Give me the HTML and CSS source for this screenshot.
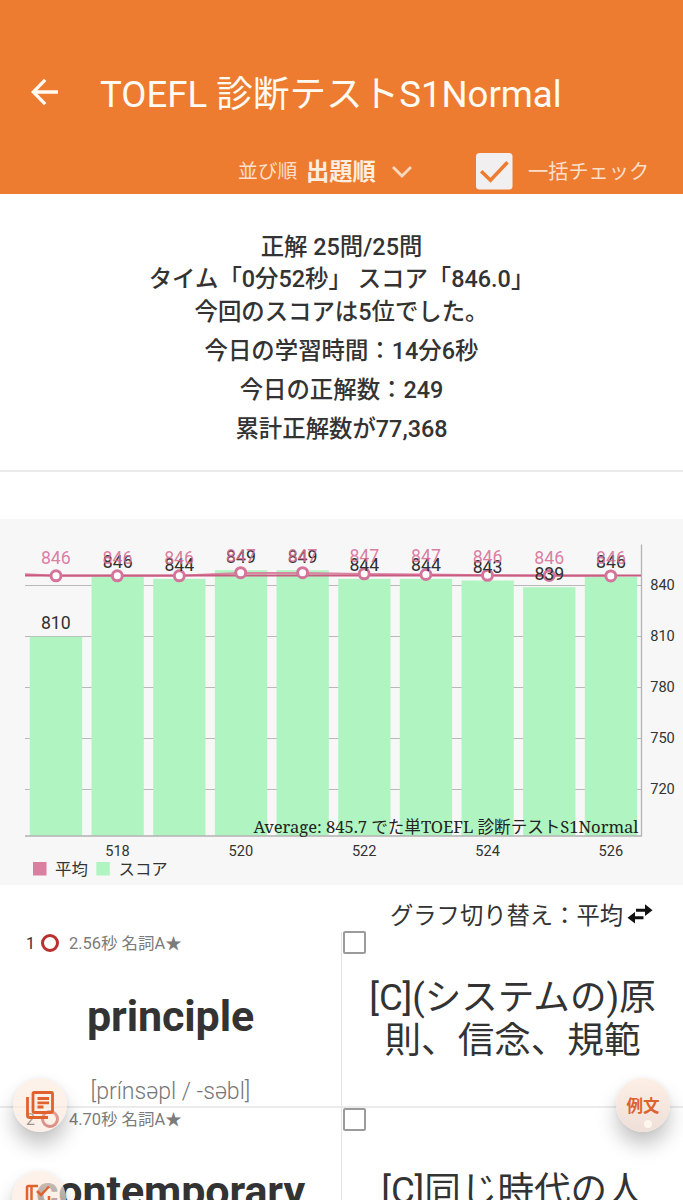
FILE: index.html
```html
<!DOCTYPE html>
<html lang="ja">
<head>
<meta charset="utf-8">
<title>TOEFL 診断テストS1Normal</title>
<link rel="stylesheet" href="styles.css">
</head>
<body>
<div class="screen">
  <header class="appbar">
    <div class="title-row">
      <svg class="back" width="28" height="28" viewBox="0 0 28 28"><path d="M27 14H3M14.2 1.8 2.2 14l12 12.2" fill="none" stroke="#fffaf2" stroke-width="3.3"/></svg>
      <h1>TOEFL 診断テストS1Normal</h1>
    </div>
    <div class="tools">
      <span class="sort-label">並び順</span>
      <span class="sort-value">出題順</span>
      <svg class="chevron" width="22" height="14" viewBox="0 0 22 14"><path d="M2 2l9 9 9-9" fill="none" stroke="#fbd9bf" stroke-width="2.8"/></svg>
      <svg class="bulk" width="37" height="37" viewBox="0 0 37 37"><rect width="36.5" height="36.5" rx="3.5" fill="#f1efef"/><path d="M5.2 18.2l9.3 9L31.5 9.3" fill="none" stroke="#ed7c30" stroke-width="3.5"/></svg>
      <span class="bulk-label">一括チェック</span>
    </div>
  </header>

  <section class="summary">
    <p class="tight">正解 25問/25問</p>
    <p class="tight">タイム「0分52秒」 スコア「846.0」</p>
    <p class="tight">今回のスコアは5位でした。</p>
    <p class="first">今日の学習時間：14分6秒</p>
    <p>今日の正解数：249</p>
    <p>累計正解数が77,368</p>
  </section>

  <section class="chart">
    <svg width="683" height="366" viewBox="0 519 683 366">
      <path class="grid" d="M25 585.5H641M25 636.5H641M25 687.5H641M25 738.5H641M25 789.5H641"/>
      <g fill="#b0f5c1">
        <rect x="29.8" y="636.8" width="52.3" height="199"/>
        <rect x="91.5" y="575.8" width="52.3" height="260"/>
        <rect x="153.2" y="578.9" width="52.3" height="257"/>
        <rect x="214.9" y="570.2" width="52.3" height="265.6"/>
        <rect x="276.5" y="570.2" width="52.3" height="265.6"/>
        <rect x="338.2" y="578.9" width="52.3" height="257"/>
        <rect x="399.8" y="578.9" width="52.3" height="257"/>
        <rect x="461.5" y="580.5" width="52.3" height="255.3"/>
        <rect x="523.1" y="587.2" width="52.3" height="248.6"/>
        <rect x="584.8" y="576.6" width="52.3" height="259.2"/>
      </g>
      <path class="axis" d="M25 836H641.5M641.5 544.5V836.5"/>
      <path class="series" d="M25 574.2L56 575.8H179.3L241 572.9H302.6L364.3 574L426 574.5L487.6 575.3L549.3 575.8H611"/>
      <path class="average" d="M25 575.6H641"/>
      <g class="dots">
        <circle cx="56" cy="575.8" r="5"/><circle cx="117.3" cy="575.8" r="5"/><circle cx="179.3" cy="575.8" r="5"/>
        <circle cx="240.7" cy="572.7" r="5"/><circle cx="302.6" cy="572.7" r="5"/><circle cx="364.2" cy="573.8" r="5"/>
        <circle cx="425.9" cy="574.5" r="5"/><circle cx="487.5" cy="575.3" r="5"/><circle cx="549.2" cy="575.5" r="5"/><circle cx="610.8" cy="575.9" r="5"/>
      </g>
      <g class="value">
        <text x="55.8" y="629">810</text>
        <text x="117.7" y="568.3">846</text>
        <text x="179.3" y="571">844</text>
        <text x="241" y="562.6">849</text>
        <text x="302.6" y="562.6">849</text>
        <text x="364.3" y="571">844</text>
        <text x="426" y="571">844</text>
        <text x="487.6" y="573.2">843</text>
        <text x="549.3" y="579.6">839</text>
        <text x="611" y="568.3">846</text>
      </g>
      <g class="mean">
        <text x="55.8" y="564.2">846</text>
        <text x="117.5" y="564.2">846</text>
        <text x="179.1" y="564.2">846</text>
        <text x="241" y="562">847</text>
        <text x="302.6" y="562">847</text>
        <text x="364.3" y="562.3">847</text>
        <text x="426" y="562.3">847</text>
        <text x="487.6" y="563.2">846</text>
        <text x="549.2" y="564.2">846</text>
        <text x="611" y="564.2">846</text>
      </g>
      <g class="tick">
        <text x="662.5" y="590">840</text><text x="662.5" y="641">810</text><text x="662.5" y="692">780</text><text x="662.5" y="743">750</text><text x="662.5" y="794">720</text>
        <text x="117.5" y="856.3">518</text><text x="240.8" y="856.3">520</text><text x="364.2" y="856.3">522</text><text x="487.6" y="856.3">524</text><text x="610.9" y="856.3">526</text>
      </g>
      <text class="caption" x="253.5" y="833" textLength="385">Average: 845.7 でた単TOEFL 診断テストS1Normal</text>
      <rect x="33" y="862" width="13.5" height="13.5" fill="#d980a0"/>
      <rect x="96.3" y="862" width="13.5" height="13.5" fill="#b0f5c1"/>
      <text class="legend" x="55" y="874.5">平均</text>
      <text class="legend" x="118.5" y="874.5">スコア</text>
    </svg>
  </section>

  <div class="switch">
    <span>グラフ切り替え：平均</span>
    <svg width="26" height="20" viewBox="0 0 26 20"><path d="M9 4.7H18V.3L25.500 6.200 18 12V7.700H9zM16.500 12.200H8V8L.5 13.800 8 19.500V15.200H16.500z" fill="#111"/></svg>
  </div>

  <main class="words">
    <article class="row">
      <div class="cell term">
        <div class="meta"><span class="num">1</span><i class="ring"></i><span>2.56秒 名詞A★</span></div>
        <div class="word">principle</div>
        <div class="ipa">[prínsəpl / -səbl]</div>
      </div>
      <div class="cell sense">
        <i class="box"></i>
        <div class="meaning">[C](システムの)原<br>則、信念、規範</div>
      </div>
    </article>
    <article class="row">
      <div class="cell term">
        <div class="meta"><span class="num">2</span><i class="ring"></i><span>4.70秒 名詞A★</span></div>
        <div class="word">contemporary</div>
      </div>
      <div class="cell sense">
        <i class="box"></i>
        <div class="meaning low">[C]同じ時代の人</div>
      </div>
    </article>
  </main>

  <div class="fab cards">
    <svg width="28" height="28" viewBox="0 0 28 28" fill="none" stroke="#e0622f" stroke-width="2.8"><rect x="7" y="1.5" width="19.5" height="20" rx="1"/><path d="M1.500 6V24.500Q1.500 26.500 3.500 26.500H22M11.500 7.500H23M11.500 11.800H23M11.500 16H17.500" /></svg>
  </div>
  <div class="fab check">
    <svg width="28" height="28" viewBox="0 0 28 28" fill="none" stroke="#e0622f" stroke-width="2.5"><path d="M13 2H3.500Q2 2 2 3.500V26H24V12M6.500 2V26M12 7l4 4 8-8.500"/></svg>
  </div>
  <div class="fab example"><span>例文</span><i class="dot"></i></div>
</div>
</body>
</html>
```
FILE: styles.css
```css
* { box-sizing: border-box; }
body { margin: 0; background: #fff; color: #333; font-family: Roboto, "Noto Sans CJK JP", sans-serif; }
.screen { position: relative; width: 683px; height: 1200px; overflow: hidden; white-space: nowrap; }

.appbar { height: 194px; background: #ed7c30; color: #fffaf2; padding-top: 65px; }
.title-row { display: flex; align-items: center; height: 58px; padding-left: 31px; }
.back { margin-top: -4px; }
h1 { margin: 2px 0 0 41px; font-size: 36.6px; font-weight: 400; line-height: 58px; }
.tools { display: flex; align-items: center; height: 40px; margin-top: 28px; padding-left: 238px; color: #fbdfcb; }
.sort-label { width: 68px; font-size: 19.8px; line-height: 28px; margin-top: 1px; }
.sort-value { width: 86px; font-size: 23.3px; line-height: 32px; margin-top: 1px; font-weight: 700; color: #fdeee0; }
.chevron { margin: 1px 62px 0 -1px; }
.bulk { margin-left: 1px; margin-right: 15px; }
.bulk-label { font-size: 20.2px; line-height: 28px; margin-top: 1px; }

.summary { height: 278px; padding-top: 37px; border-bottom: 2px solid #ebebeb; text-align: center; font-size: 23.4px; font-weight: 500; }
.summary p { margin: 0; line-height: 39.2px; }
.summary .tight { line-height: 32.3px; }
.summary .first { margin-top: 4px; }

.chart { height: 366px; margin-top: 47px; background: #f7f7f7; }
.chart svg { display: block; }
.grid { stroke: #b9b9b9; stroke-width: 1; }
.axis { fill: none; stroke: #b3b3b3; stroke-width: 1.3; }
.series { fill: none; stroke: #dc84a4; stroke-width: 2; }
.average { stroke: #c95a80; stroke-width: 2; }
.value, .mean { font-size: 17.7px; text-anchor: middle; }
.value { fill: #303030; }
.mean { fill: #d86f97; fill-opacity: .9; }
.dots { fill: #fff; stroke: #d5749a; stroke-width: 3; }
.tick { font-size: 14.6px; text-anchor: middle; fill: #333; }
.caption { font-family: "Noto Serif", "Liberation Serif", "Noto Sans CJK JP", serif; font-size: 16.6px; fill: #222; }
.legend { font-size: 16.4px; fill: #333; }

.switch { display: flex; justify-content: flex-end; align-items: center; height: 47px; padding: 12px 30px 0 0; font-size: 23.3px; }
.switch span { line-height: 35px; margin-top: 3px; }
.switch svg { margin-left: 4px; margin-top: -1px; }

.row { display: flex; height: 176px; }
.row + .row { border-top: 2px solid #ebebeb; height: 178px; margin-top: -2px; }
.term { width: 341px; }
.sense { width: 342px; border-left: 1px solid #e3e3e3; }
.meta { display: flex; align-items: center; height: 22px; padding-left: 26px; font-size: 16.45px; line-height: 22px; color: #7b7b7b; }
.meta span { margin-top: 1px; }
.meta .num { width: 15px; font-size: 16px; color: #333; }
.ring { width: 18px; height: 18px; border: 3px solid #b9302f; border-radius: 50%; margin-right: 10px; }
.word { margin-top: 36px; height: 52px; line-height: 52px; text-align: center; font-size: 43px; font-weight: 700; letter-spacing: -.1px; }
.row + .row .word { margin-top: 35px; }
.ipa { margin-top: 35px; line-height: 30px; text-align: center; font-size: 23.1px; font-weight: 300; color: #777; }
.box { display: block; width: 23px; height: 23px; margin-left: 1px; border: 2px solid #9b9b9b; border-radius: 2px; }
.row:first-child .box { margin-top: -1px; }
.meaning { margin-top: 22px; text-align: center; font-size: 36.6px; line-height: 43px; }
.meaning.low { margin-top: 38px; }

.fab { position: absolute; width: 54px; height: 54px; border-radius: 50%; display: flex; align-items: center; justify-content: center; background: linear-gradient(rgba(253,239,228,.8), rgba(247,224,209,.5)); box-shadow: 0 13px 20px rgba(0,0,0,.23), 0 0 5px rgba(0,0,0,.06); }
.cards { left: 13px; top: 1078px; }
.check { left: 12px; top: 1171px; }
.example { left: 616px; top: 1078px; color: #dc6230; font-size: 16.5px; font-weight: 700; background: linear-gradient(#fdefe4, #eee0d8); }
.dot { position: absolute; left: 28px; top: 42px; width: 8px; height: 8px; border-radius: 50%; background: #fff6ed; }
```
